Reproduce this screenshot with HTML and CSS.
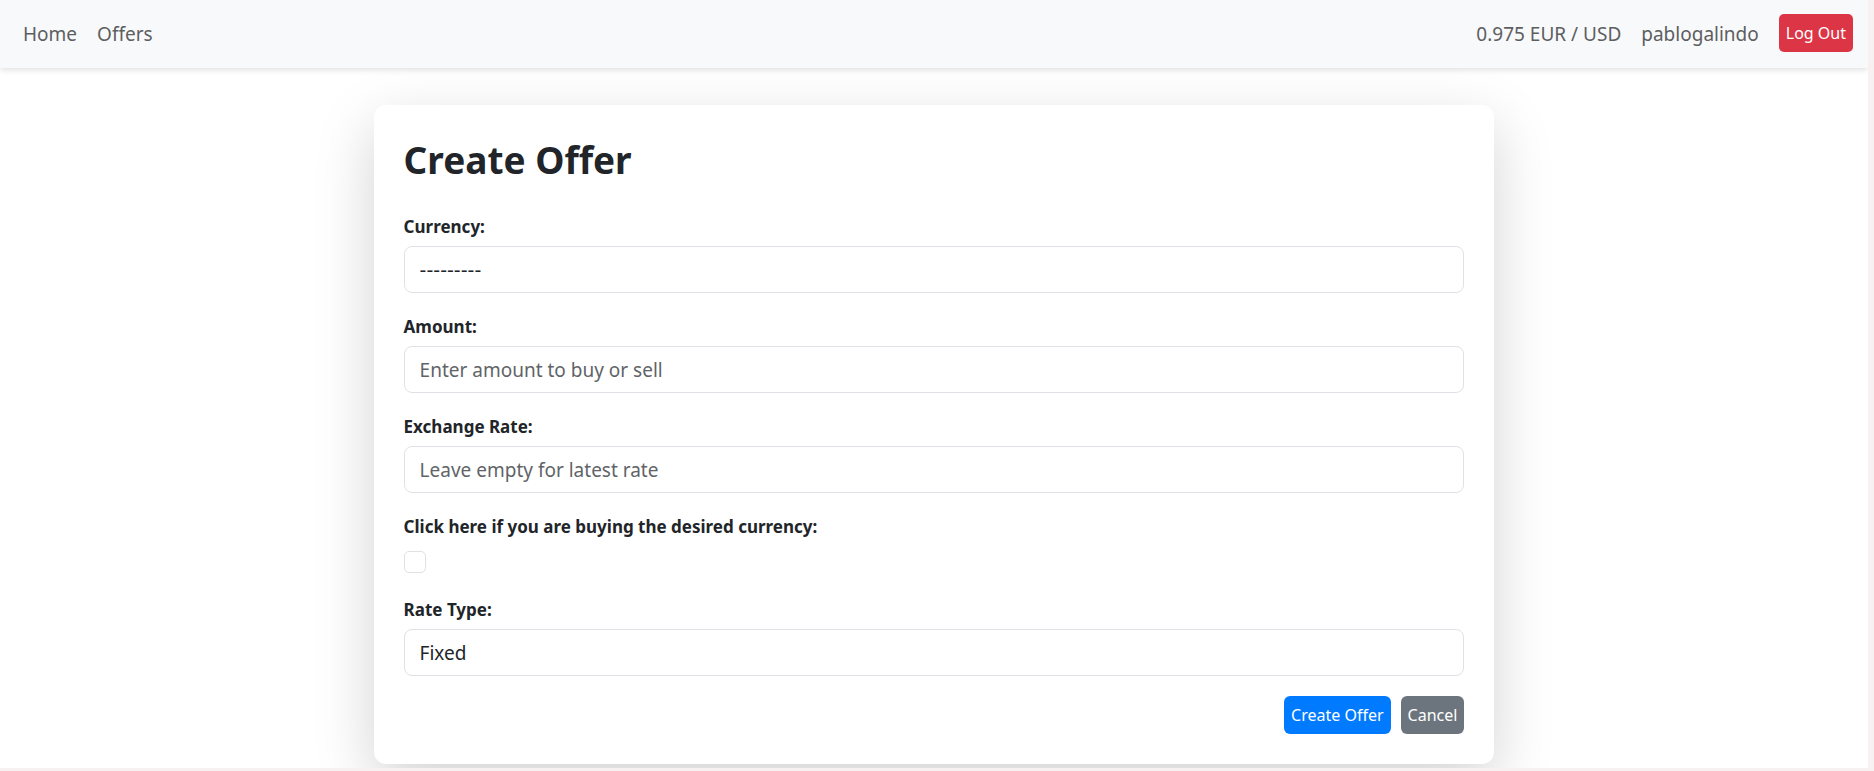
FILE: index.html
```
<!DOCTYPE html>
<html lang="en">
<head>
  <meta charset="utf-8">
  <meta name="viewport" content="width=device-width, initial-scale=1">
  <title>Create Offer</title>
  <link rel="stylesheet" href="styles.css">
</head>
<body>
  <div class="page">
    <nav class="navbar">
      <div class="nav-group">
        <a class="nav-link" href="#home">Home</a>
        <a class="nav-link" href="#offers">Offers</a>
      </div>
      <div class="nav-group">
        <span class="nav-link">0.975 EUR / USD</span>
        <a class="nav-link" href="#profile">pablogalindo</a>
        <button class="btn btn-danger" type="button">Log Out</button>
      </div>
    </nav>
    <main class="card">
      <h1 class="title">Create Offer</h1>
      <form class="form">
        <div class="field">
          <label class="label" for="currency">Currency:</label>
          <select class="control control-blank" id="currency"><option>---------</option><option>EUR</option><option>USD</option></select>
        </div>
        <div class="field">
          <label class="label" for="amount">Amount:</label>
          <input class="control" id="amount" type="text" placeholder="Enter amount to buy or sell">
        </div>
        <div class="field">
          <label class="label" for="rate">Exchange Rate:</label>
          <input class="control" id="rate" type="text" placeholder="Leave empty for latest rate">
        </div>
        <div class="field">
          <label class="label" for="buying">Click here if you are buying the desired currency:</label>
          <input class="check" id="buying" type="checkbox">
        </div>
        <div class="field">
          <label class="label" for="type">Rate Type:</label>
          <select class="control" id="type"><option>Fixed</option><option>Variable</option></select>
        </div>
        <div class="actions">
          <button class="btn btn-primary" type="button">Create Offer</button>
          <button class="btn btn-secondary" type="button">Cancel</button>
        </div>
      </form>
    </main>
  </div>
</body>
</html>
```
FILE: styles.css
```
* {
  box-sizing: border-box;
}

body {
  margin: 0;
  background: #f8f1f2;
  color: #212529;
  font-family: "Segoe UI", "Noto Sans", "Open Sans", sans-serif;
  font-size: 19px;
}

.page {
  min-height: calc(100vh - 3px);
  margin: 0 6px 3px 0;
  padding-bottom: 4px;
  background: #fff;
  overflow: hidden;
}

.navbar {
  position: relative;
  z-index: 1;
  display: flex;
  align-items: center;
  justify-content: space-between;
  padding: 14px 15px 16px 23px;
  background: #f8f9fb;
  box-shadow: 0 2px 6px rgba(0, 0, 0, 0.12);
}

.nav-group {
  display: flex;
  align-items: center;
  gap: 20px;
}

.nav-link {
  padding-top: 2px;
  color: #5d5e5f;
  text-decoration: none;
}

.btn {
  height: 38px;
  padding: 0 7px;
  border: 0;
  border-radius: 6px;
  color: #fff;
  font-family: inherit;
  font-size: 16px;
  cursor: pointer;
}

.btn-danger {
  border-radius: 5px;
  background: #dc3545;
}

.btn-primary {
  background: #007bff;
}

.btn-secondary {
  background: #6c757d;
}

.card {
  width: 60%;
  margin: 37px auto 0;
  padding: 30px;
  border-radius: 12px;
  background: #fff;
  box-shadow: 0 20px 60px rgba(0, 0, 0, 0.175);
}

.title {
  margin: 0 0 27px;
  font-size: 37px;
  font-weight: 700;
  line-height: 50px;
}

.form {
  display: flex;
  flex-direction: column;
  gap: 19px;
}

.field {
  display: flex;
  flex-direction: column;
  gap: 4px;
}

.label {
  font-size: 17px;
  font-weight: 700;
  line-height: 30px;
}

.control {
  appearance: none;
  width: 100%;
  height: 47px;
  padding: 0 15px;
  border: 1px solid #dee2e6;
  border-radius: 8px;
  background: #fff;
  color: #212529;
  font-family: inherit;
  font-size: 19px;
}

.control::placeholder {
  color: #5f6468;
  opacity: 1;
}

.control-blank {
  font-family: "DejaVu Sans", sans-serif;
}

.check {
  appearance: none;
  width: 22px;
  height: 22px;
  margin: 5px 0 3px;
  border: 1px solid #dee2e6;
  border-radius: 5px;
  background: #fff;
}

.check:checked {
  border-color: #007bff;
  background: #007bff;
}

.actions {
  display: flex;
  justify-content: flex-end;
  gap: 10px;
  padding-top: 1px;
}
```
